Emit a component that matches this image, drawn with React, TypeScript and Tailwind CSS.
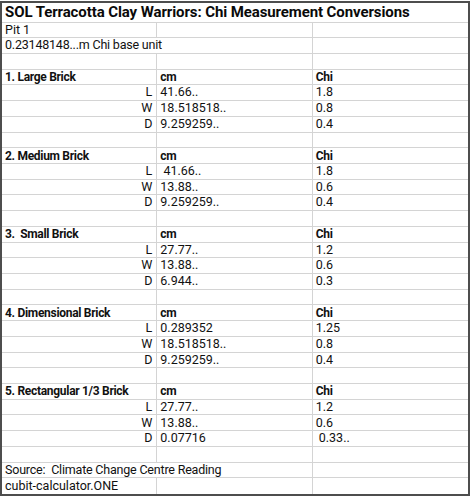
import React from "react";

type Row =
  | { kind: "span"; text: string; bold?: boolean; overflow2?: boolean }
  | { kind: "cells"; a: string; b: string; c: string; bold?: boolean; alignA?: "right" };

const sections: { name: string; rows: [string, string, string][] }[] = [
  { name: "1. Large Brick", rows: [["L", "41.66..", "1.8"], ["W", "18.518518..", "0.8"], ["D", "9.259259..", "0.4"]] },
  { name: "2. Medium Brick", rows: [["L", " 41.66..", "1.8"], ["W", "13.88..", "0.6"], ["D", "9.259259..", "0.4"]] },
  { name: "3.  Small Brick", rows: [["L", "27.77..", "1.2"], ["W", "13.88..", "0.6"], ["D", "6.944..", "0.3"]] },
  { name: "4. Dimensional Brick", rows: [["L", "0.289352", "1.25"], ["W", "18.518518..", "0.8"], ["D", "9.259259..", "0.4"]] },
  { name: "5. Rectangular 1/3 Brick", rows: [["L", "27.77..", "1.2"], ["W", "13.88..", "0.6"], ["D", "0.07716", " 0.33.."]] },
];

const rows: Row[] = [];
rows.push({ kind: "cells", a: "Pit 1", b: "", c: "" });
rows.push({ kind: "span", text: "0.23148148...m Chi base unit", overflow2: true });
rows.push({ kind: "cells", a: "", b: "", c: "" });
for (const s of sections) {
  rows.push({ kind: "cells", a: s.name, b: "cm", c: "Chi", bold: true });
  for (const r of s.rows) rows.push({ kind: "cells", a: r[0], b: r[1], c: r[2], alignA: "right" });
  rows.push({ kind: "cells", a: "", b: "", c: "" });
}
rows.push({ kind: "span", text: "Source:  Climate Change Centre Reading", overflow2: true });
rows.push({ kind: "cells", a: "cubit-calculator.ONE", b: "", c: "" });

export default function App() {
  const last = rows.length - 1;
  return (
    <div className="w-[471px] h-[497px] bg-white pt-[1px]">
      <div
        className="w-[470px] h-[495px] border-2 border-[#4d4d4d] bg-white grid grid-cols-3 grid-rows-[19.5px_repeat(30,1fr)] text-[12.5px] text-[#111] leading-none"
        style={{ fontFamily: "Roboto, 'Noto Sans', sans-serif" }}
      >
        <div className="col-span-3 border-b border-[#d4d4d4] flex items-center px-[3px] font-bold text-[15px] tracking-[-0.1px] whitespace-nowrap overflow-hidden text-[#0a0a0a]">
          SOL Terracotta Clay Warriors: Chi Measurement Conversions
        </div>
        {rows.map((r, i) => {
          const bb = i === last ? "" : "border-b border-[#d4d4d4]";
          if (r.kind === "span") {
            return (
              <React.Fragment key={i}>
                <div className={`col-span-2 ${bb} border-r border-[#d4d4d4] flex items-center px-[3px] whitespace-pre tracking-[-0.2px]`}>{r.text}</div>
                <div className={`${bb}`} />
              </React.Fragment>
            );
          }
          const fw = r.bold ? "font-bold text-[12px] tracking-[-0.3px]" : "";
          return (
            <React.Fragment key={i}>
              <div
                className={`${bb} border-r border-[#d4d4d4] flex items-center px-[3px] whitespace-pre ${fw} ${r.alignA === "right" ? "justify-end pr-[4px]" : ""}`}
              >
                {r.a}
              </div>
              <div className={`${bb} border-r border-[#d4d4d4] flex items-center px-[3px] whitespace-pre ${fw}`}>{r.b}</div>
              <div className={`${bb} flex items-center px-[3px] whitespace-pre ${fw}`}>{r.c}</div>
            </React.Fragment>
          );
        })}
      </div>
    </div>
  );
}
